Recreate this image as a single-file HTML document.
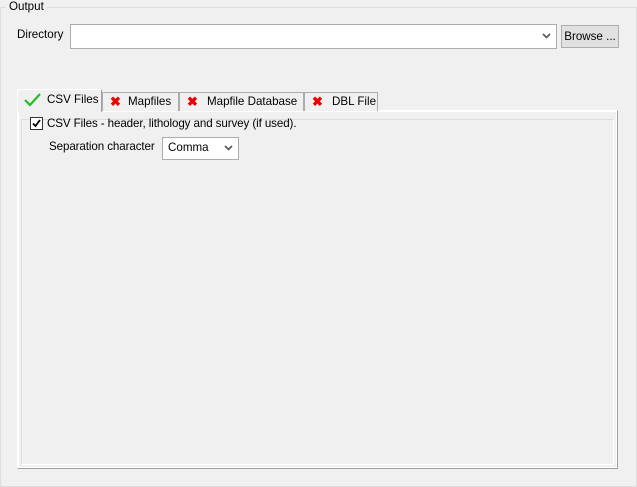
<!DOCTYPE html>
<html><head><style>
body{margin:0;width:637px;height:487px;background:#f0f0f0;font-family:"Liberation Sans",sans-serif;font-size:11.6px;color:#000;position:relative;overflow:hidden;white-space:nowrap}
.a{position:absolute}
.tab{position:absolute;top:92px;height:19px;border:1px solid #acacac;border-bottom:none;background:#f0f0f0;box-sizing:border-box;line-height:18px}
.x{color:#e00;font-weight:bold;font-size:13px;position:absolute;top:0}
</style></head><body>
<div class="a" style="left:0;top:7px;width:635px;height:478px;border:1px solid #dcdcdc"></div>
<div class="a" style="left:6px;top:0;padding:0 3px;background:#f0f0f0;line-height:14px">Output</div>
<div class="a" style="left:17px;top:28px">Directory</div>
<div class="a" style="left:70px;top:24px;width:485px;height:23px;border:1px solid #acacac;background:#fff"></div>
<svg class="a" style="left:542px;top:33px" width="9" height="6"><path d="M1 1L4.5 4.5L8 1" stroke="#555" stroke-width="1.6" fill="none"/></svg>
<div class="a" style="left:561px;top:25px;width:56px;height:21px;border:1px solid #adadad;background:#e1e1e1;text-align:center;line-height:21px">Browse ...</div>
<div class="a" style="left:17px;top:110px;width:599px;height:357px;border:1px solid #fff;border-right-color:#a0a0a0;border-bottom-color:#a0a0a0;box-shadow:inset 0 0 0 1px #fff"></div>
<div class="a" style="left:21px;top:119px;width:591px;height:344px;border:1px solid #dcdcdc;border-right-color:#fff;border-bottom-color:#fff"></div>
<div class="tab" style="left:102px;width:77px"><span class="x" style="left:7px">✖</span><span class="a" style="left:25px">Mapfiles</span></div>
<div class="tab" style="left:179px;width:125px"><span class="x" style="left:7px">✖</span><span class="a" style="left:27px">Mapfile Database</span></div>
<div class="tab" style="left:304px;width:74px"><span class="x" style="left:7px">✖</span><span class="a" style="left:27px">DBL File</span></div>
<div class="a" style="left:17px;top:89px;width:85px;height:23px;background:#f0f0f0;border:1px solid #fff;border-bottom:none;border-right-color:#a0a0a0;box-sizing:border-box"></div>
<svg class="a" style="left:24px;top:93px" width="17" height="14"><path d="M1 7L6 12L16 1" stroke="#22c022" stroke-width="2.2" fill="none"/></svg>
<div class="a" style="left:47px;top:93px">CSV Files</div>
<div class="a" style="left:30px;top:117px;width:11px;height:11px;border:1px solid #333;background:#fff"></div>
<svg class="a" style="left:32px;top:119px" width="9" height="9"><path d="M1 4.5L3.5 7L8 1" stroke="#000" stroke-width="1.8" fill="none"/></svg>
<div class="a" style="left:47px;top:117px;letter-spacing:-0.1px">CSV Files - header, lithology and survey (if used).</div>
<div class="a" style="left:49px;top:140px;letter-spacing:-0.1px">Separation character</div>
<div class="a" style="left:162px;top:137px;width:75px;height:21px;border:1px solid #acacac;background:#fff"></div>
<div class="a" style="left:168px;top:141px">Comma</div>
<svg class="a" style="left:224px;top:145px" width="9" height="6"><path d="M1 1L4.5 4.5L8 1" stroke="#555" stroke-width="1.6" fill="none"/></svg>
</body></html>
